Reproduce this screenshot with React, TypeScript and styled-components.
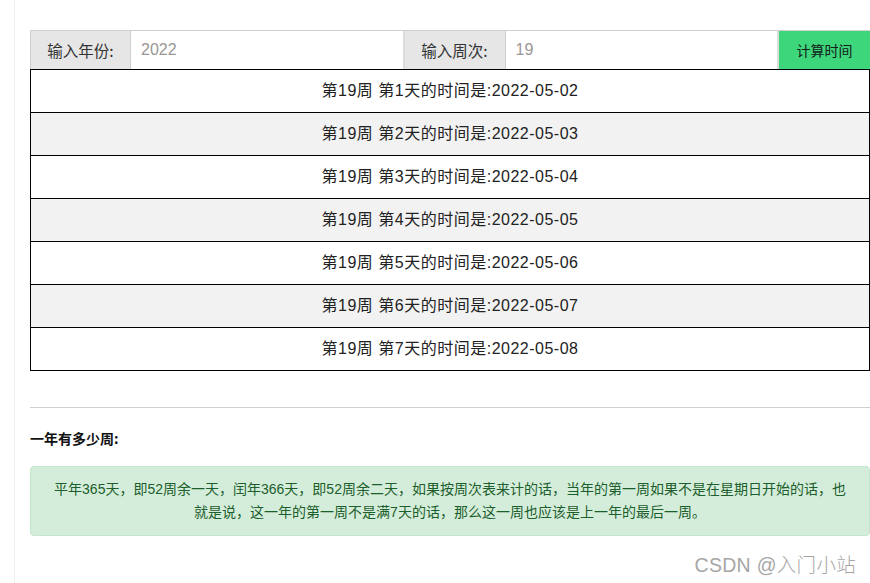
import React from "react";
import styled, { createGlobalStyle } from "styled-components";

const Global = createGlobalStyle`
  html, body { margin: 0; padding: 0; background: #fff; }
  body { font-family: "Liberation Sans", "Noto Sans CJK SC", sans-serif; overflow: hidden; }
  * { box-sizing: border-box; }
`;

const Frame = styled.div`
  position: relative;
  margin-left: 14px;
  border-left: 1px solid #efefef;
  padding: 30px 0 0 15px;
  min-height: 583px;
`;

const InputBar = styled.div`
  display: flex;
  height: 39px;
  border-top: 1px solid #cfcfcf;
  border-left: 1px solid #cfcfcf;
`;

const Label = styled.div<{ $w: number }>`
  width: ${(p) => p.$w}px;
  flex: none;
  background: #e6e6e6;
  border-right: 1px solid #cfcfcf;
  display: flex;
  align-items: center;
  justify-content: center;
  font-family: "Noto Sans CJK SC", sans-serif;
  font-size: 15.5px;
  color: #333;
  line-height: 20px;
`;

const Field = styled.input`
  flex: 1;
  min-width: 0;
  border: none;
  border-right: 2px solid #dcdcdc;
  padding: 0 10px;
  font-family: "Liberation Sans", sans-serif;
  font-size: 16px;
  color: #9a9696;
  outline: none;
  background: #fff;
`;

const Button = styled.button`
  width: 91px;
  flex: none;
  border: none;
  background: #3dd67a;
  font-family: "Noto Sans CJK SC", sans-serif;
  font-size: 14px;
  color: #14201a;
  padding: 0;
  cursor: pointer;
`;

const Table = styled.div`
  border: 1px solid #000;
`;

const Row = styled.div<{ $alt: boolean }>`
  height: 43px;
  border-bottom: 1px solid #000;
  background: ${(p) => (p.$alt ? "#f2f2f2" : "#fff")};
  display: flex;
  align-items: center;
  justify-content: center;
  font-size: 16px;
  letter-spacing: 0.5px;
  color: #222;
  line-height: 20px;
  &:last-child {
    height: 42px;
    border-bottom: none;
  }
`;

const Rule = styled.hr`
  margin: 36px 0 0;
  border: none;
  border-top: 1px solid #d0d0d0;
`;

const Heading = styled.h4`
  margin: 20px 0 0;
  font-family: "Noto Sans CJK SC", sans-serif;
  font-size: 14px;
  font-weight: 700;
  line-height: 20px;
  color: #111;
`;

const Note = styled.div`
  margin-top: 18px;
  background: #d4edda;
  border: 1px solid #c3e6cb;
  border-radius: 4px;
  padding: 11px 20px;
  text-align: center;
  font-size: 14px;
  line-height: 23px;
  color: #1c5e2c;
`;

const Watermark = styled.div`
  position: absolute;
  right: 14px;
  bottom: 6px;
  font-size: 19.5px;
  letter-spacing: 0.3px;
  color: #a6a6a6;
  line-height: 24px;
  font-weight: 300;
`;

const days = ["2022-05-02", "2022-05-03", "2022-05-04", "2022-05-05", "2022-05-06", "2022-05-07", "2022-05-08"];

export default function App() {
  return (
    <>
      <Global />
      <Frame>
        <InputBar>
          <Label $w={100}>输入年份:</Label>
          <Field defaultValue="2022" />
          <Label $w={101}>输入周次:</Label>
          <Field defaultValue="19" />
          <Button>计算时间</Button>
        </InputBar>
        <Table>
          {days.map((d, i) => (
            <Row key={d} $alt={i % 2 === 1}>
              第19周 第{i + 1}天的时间是:{d}
            </Row>
          ))}
        </Table>
        <Rule />
        <Heading>一年有多少周:</Heading>
        <Note>
          平年365天，即52周余一天，闰年366天，即52周余二天，如果按周次表来计的话，当年的第一周如果不是在星期日开始的话，也就是说，这一年的第一周不是满7天的话，那么这一周也应该是上一年的最后一周。
        </Note>
        <Watermark>CSDN @入门小站</Watermark>
      </Frame>
    </>
  );
}
